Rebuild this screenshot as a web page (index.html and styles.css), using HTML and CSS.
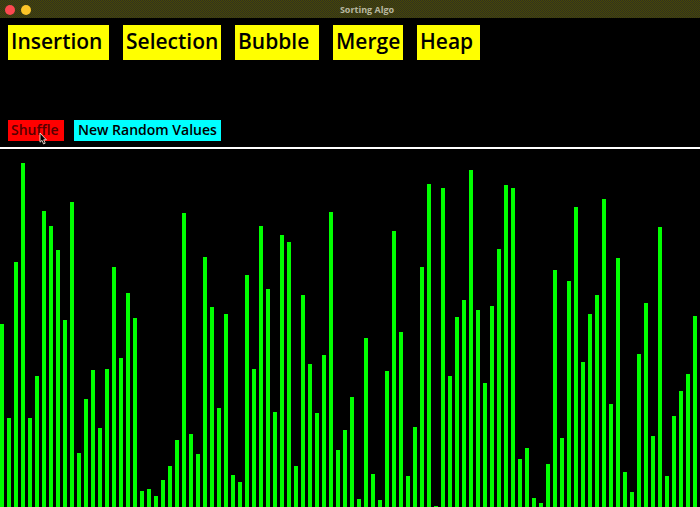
FILE: index.html
```html
<!DOCTYPE html>
<html lang="en">
<head>
<meta charset="utf-8">
<title>Sorting Algo</title>
<link rel="stylesheet" href="styles.css">
</head>
<body>
<header class="titlebar">
  <div class="lights">
    <button class="light close" aria-label="Close"></button>
    <button class="light minimize" aria-label="Minimize"></button>
  </div>
  <h1 class="title">Sorting Algo</h1>
</header>
<main class="app">
  <div class="controls">
    <nav class="algorithms">
      <button class="algo insertion">Insertion</button>
      <button class="algo selection">Selection</button>
      <button class="algo bubble">Bubble</button>
      <button class="algo merge">Merge</button>
      <button class="algo heap">Heap</button>
    </nav>
    <div class="actions">
      <button class="action shuffle">Shuffle
        <svg class="cursor" viewBox="0 0 8 13" width="8" height="13" aria-hidden="true">
          <path d="M1 1V10.2L3 8.4L4.6 12L6.2 11.2L4.7 7.8H7.4Z" fill="#000" stroke="#f0dcd0" stroke-width="0.9"/>
        </svg>
      </button>
      <button class="action random">New Random Values</button>
    </div>
  </div>
  <div class="chart" id="chart"></div>
</main>
<script src="chart.js"></script>
</body>
</html>
```
FILE: styles.css
```css
* {
  box-sizing: border-box;
}

body {
  margin: 0;
  min-height: 100vh;
  display: flex;
  flex-direction: column;
  background: #000;
  font-family: "Open Sans", "Noto Sans", sans-serif;
}

button {
  border: 0;
  margin: 0;
  color: #000;
  font-family: inherit;
  text-align: left;
  white-space: nowrap;
}

.titlebar {
  display: flex;
  align-items: center;
  height: 18px;
  padding: 2px 5px 0;
  background: repeating-conic-gradient(#484804 0 25%, #303020 0 50%) 0 0 / 2px 2px;
}

.lights {
  display: flex;
  gap: 6px;
}

.light {
  width: 10px;
  height: 10px;
  padding: 0;
  border-radius: 50%;
}

.close {
  background: #fc4850;
}

.minimize {
  background: #fcc428;
}

.title {
  flex: 1;
  margin: 0;
  padding-left: 8px;
  color: #b8b8a0;
  font-size: 9px;
  font-weight: 700;
  line-height: 16px;
  text-align: center;
}

.app {
  flex: 1;
  display: flex;
  flex-direction: column;
}

.controls {
  display: flex;
  flex-direction: column;
  gap: 60px;
  padding: 7px 8px 6px;
  border-bottom: 2px solid #fff;
}

.algorithms {
  display: flex;
  gap: 14px;
}

.algo {
  height: 35px;
  padding: 0 3px 3px;
  background: #ff0;
  font-size: 21px;
  font-weight: 600;
  line-height: 32px;
}

.insertion {
  width: 101px;
}

.selection {
  width: 98px;
}

.bubble {
  width: 84px;
}

.merge {
  width: 70px;
}

.heap {
  width: 63px;
}

.actions {
  display: flex;
  gap: 10px;
}

.action {
  height: 21px;
  padding: 0 4px 1px;
  font-size: 14px;
  font-weight: 600;
  line-height: 20px;
}

.shuffle {
  position: relative;
  width: 56px;
  padding: 0 3px 1px;
  background: #f00;
  color: #500;
}

.random {
  width: 147px;
  background: #0ff;
}

.cursor {
  position: absolute;
  left: 31px;
  top: 12px;
}

.chart {
  flex: 1;
  display: grid;
  grid-auto-flow: column;
  grid-auto-columns: 1fr;
  align-items: end;
  min-height: 358px;
}

.bar {
  width: 4px;
  background: #0f0;
}
```
FILE: chart.js
```js
const FULL_SCALE = 358;

const values = [
  183, 89, 245, 344, 89, 131, 296, 281, 257, 187,
  305, 54, 108, 137, 79, 138, 240, 149, 214, 189,
  16, 18, 11, 27, 41, 67, 294, 73, 53, 250,
  200, 99, 193, 32, 25, 232, 138, 281, 218, 95,
  272, 265, 41, 212, 143, 94, 152, 295, 57, 77,
  110, 8, 169, 33, 7, 136, 276, 175, 31, 80,
  240, 323, 1, 319, 131, 190, 207, 337, 197, 124,
  201, 258, 322, 319, 48, 59, 9, 4, 43, 237,
  69, 226, 300, 145, 193, 212, 308, 103, 249, 35,
  15, 153, 204, 71, 280, 31, 91, 116, 133, 191
];

const chart = document.getElementById("chart");
for (const value of values) {
  const bar = document.createElement("div");
  bar.className = "bar";
  bar.style.height = (value / FULL_SCALE) * 100 + "%";
  chart.append(bar);
}
```
